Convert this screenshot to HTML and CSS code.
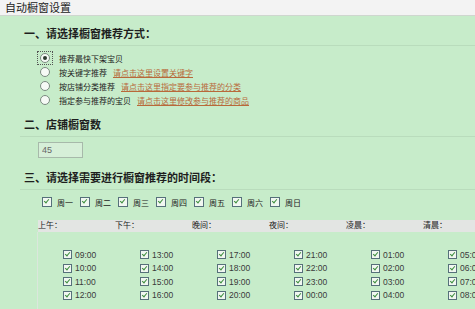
FILE: index.html
```html
<!DOCTYPE html>
<html lang="zh-CN">
<head>
   <meta charset="UTF-8">
   <meta name="viewport" content="width=device-width, initial-scale=1.0">
   <title>自动橱窗设置</title>
   <link rel="stylesheet" href="styles.css">
</head>
<body>
   <div class="topbar">自动橱窗设置</div>

   <div class="main">
      <h2 class="sec-title">一、请选择橱窗推荐方式：</h2>
      <ul class="modes">
         <li><span class="focus"><span class="radio on"></span></span><span class="lbl">推荐最快下架宝贝</span></li>
         <li><span class="focus"><span class="radio"></span></span><span class="lbl">按关键字推荐</span><a href="#">请点击这里设置关键字</a></li>
         <li><span class="focus"><span class="radio"></span></span><span class="lbl">按店铺分类推荐</span><a href="#">请点击这里指定要参与推荐的分类</a></li>
         <li><span class="focus"><span class="radio"></span></span><span class="lbl">指定参与推荐的宝贝</span><a href="#">请点击这里修改参与推荐的商品</a></li>
      </ul>

      <h2 class="sec-title">二、店铺橱窗数</h2>
      <div class="count"><input type="text" value="45"></div>

      <h2 class="sec-title mt8">三、请选择需要进行橱窗推荐的时间段：</h2>
      <div class="weekdays">
         <label><span class="cb"></span>周一</label>
         <label><span class="cb"></span>周二</label>
         <label><span class="cb"></span>周三</label>
         <label><span class="cb"></span>周四</label>
         <label><span class="cb"></span>周五</label>
         <label><span class="cb"></span>周六</label>
         <label><span class="cb"></span>周日</label>
      </div>

      <div class="times">
         <div class="times-head">
            <div>上午：</div>
            <div>下午：</div>
            <div>晚间：</div>
            <div>夜间：</div>
            <div>凌晨：</div>
            <div>清晨：</div>
         </div>
         <div class="times-body">
            <div class="col">
               <label><span class="cb"></span>09:00</label>
               <label><span class="cb"></span>10:00</label>
               <label><span class="cb"></span>11:00</label>
               <label><span class="cb"></span>12:00</label>
            </div>
            <div class="col">
               <label><span class="cb"></span>13:00</label>
               <label><span class="cb"></span>14:00</label>
               <label><span class="cb"></span>15:00</label>
               <label><span class="cb"></span>16:00</label>
            </div>
            <div class="col">
               <label><span class="cb"></span>17:00</label>
               <label><span class="cb"></span>18:00</label>
               <label><span class="cb"></span>19:00</label>
               <label><span class="cb"></span>20:00</label>
            </div>
            <div class="col">
               <label><span class="cb"></span>21:00</label>
               <label><span class="cb"></span>22:00</label>
               <label><span class="cb"></span>23:00</label>
               <label><span class="cb"></span>00:00</label>
            </div>
            <div class="col">
               <label><span class="cb"></span>01:00</label>
               <label><span class="cb"></span>02:00</label>
               <label><span class="cb"></span>03:00</label>
               <label><span class="cb"></span>04:00</label>
            </div>
            <div class="col">
               <label><span class="cb"></span>05:00</label>
               <label><span class="cb"></span>06:00</label>
               <label><span class="cb"></span>07:00</label>
               <label><span class="cb"></span>08:00</label>
            </div>
         </div>
      </div>
   </div>
</body>
</html>
```

FILE: styles.css
```css
html, body {
   margin: 0;
   padding: 0;
}

body {
   width: 475px;
   height: 309px;
   overflow: hidden;
   background: #c7ecca;
   color: #333;
   font-family: "Liberation Sans", "Noto Sans CJK SC", sans-serif;
   font-size: 8px;
}

.topbar {
   height: 15px;
   line-height: 15px;
   padding-left: 5px;
   background: #f3f3f3;
   border-bottom: 1px solid #cfd6cf;
   font-family: "Noto Sans CJK SC", sans-serif;
   font-size: 11px;
   color: #222;
}

.sec-title {
   margin: 6px 0 0 20px;
   padding-left: 4px;
   height: 23px;
   line-height: 23px;
   border-bottom: 1px solid #b9dcbc;
   font-family: "Noto Sans CJK SC", sans-serif;
   font-size: 11px;
   font-weight: bold;
   color: #1e1e1e;
}

.sec-title.mt8 {
   margin-top: 8px;
}

/* 推荐方式 */
.modes {
   list-style: none;
   margin: 5px 0 0 0;
   padding: 0 0 0 37px;
}

.modes li {
   display: flex;
   align-items: center;
   height: 14px;
}

.focus {
   display: flex;
   align-items: center;
   justify-content: center;
   width: 14px;
   height: 12px;
   margin-right: 6px;
   border: 1px dotted transparent;
}

.modes li:first-child .focus {
   border-color: #555;
}

.radio {
   width: 8px;
   height: 8px;
   border: 1px solid #7a8a80;
   border-radius: 50%;
   background: #f6faf6;
   display: flex;
   align-items: center;
   justify-content: center;
}

.radio.on::after {
   content: '';
   width: 4px;
   height: 4px;
   border-radius: 50%;
   background: #2e3a30;
}

.lbl {
   color: #222;
}

.modes a {
   margin-left: 6px;
   color: #b8693a;
   text-decoration: underline;
}

/* 橱窗数 */
.count {
   margin: 5px 0 0 38px;
   height: 16px;
}

.count input {
   box-sizing: border-box;
   width: 45px;
   height: 16px;
   margin: 0;
   padding: 0 0 0 3px;
   border: 1px solid #a7b9aa;
   background: #d6efd8;
   color: #666;
   font-family: "Liberation Sans", sans-serif;
   font-size: 9px;
   outline: none;
}

/* 复选框 */
.cb {
   position: relative;
   box-sizing: border-box;
   display: inline-block;
   width: 9px;
   height: 9px;
   border: 1px solid #56707a;
   background: #f1f7f1;
   flex: none;
}

.cb::after {
   content: '';
   position: absolute;
   left: 2px;
   top: 0px;
   width: 2px;
   height: 4px;
   border-right: 1.5px solid #3d8f3d;
   border-bottom: 1.5px solid #3d8f3d;
   transform: rotate(40deg);
}

.weekdays {
   display: flex;
   margin: 5px 0 0 42px;
   height: 14px;
   align-items: center;
}

.weekdays label {
   display: flex;
   align-items: center;
   width: 38px;
   font-family: "Noto Sans CJK SC", sans-serif;
   color: #222;
}

.weekdays .cb {
   width: 10px;
   height: 10px;
   margin-right: 5px;
}

/* 时间段 */
.times {
   margin: 11px 0 0 38px;
   width: 470px;
}

.times-head {
   display: flex;
   height: 12px;
   line-height: 12px;
   background: #e3e5e3;
   color: #222;
}

.times-head div {
   width: 77px;
   flex: none;
}

.times-body {
   display: flex;
   padding-top: 16px;
   height: 70px;
   border-left: 1px solid #dbe7dc;
   margin-left: -1px;
}

.times-body .col {
   width: 77px;
   flex: none;
   padding-left: 25px;
   box-sizing: border-box;
}

.times-body label {
   display: flex;
   align-items: center;
   height: 13.5px;
   color: #3a3a3a;
   font-size: 8.5px;
}

.times-body .cb {
   margin-right: 3px;
}
```
